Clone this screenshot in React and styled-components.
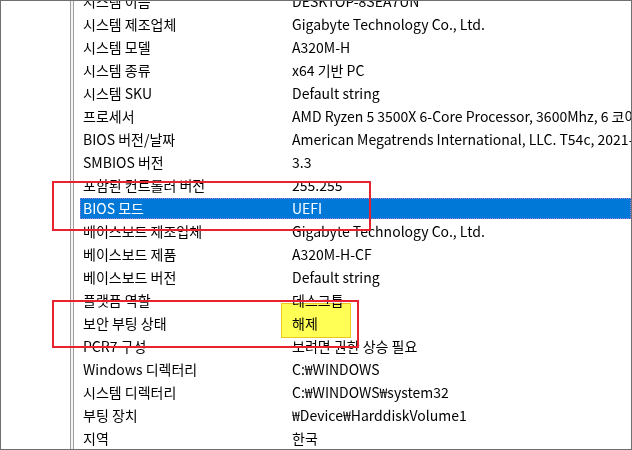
import React from "react";
import styled, { createGlobalStyle, css } from "styled-components";

const Global = createGlobalStyle`
  html, body { margin: 0; padding: 0; background: #ffffff; }
  body { font-family: "Noto Sans CJK KR", "Noto Sans", sans-serif; }
`;

const Frame = styled.div`
  position: relative;
  width: 632px;
  height: 450px;
  box-sizing: border-box;
  border: 1px solid #6f6f6f;
  display: flex;
  overflow: hidden;
  background: #fff;
`;

const TreePane = styled.div`
  width: 69px;
  flex: none;
  background: #fff;
`;

const Splitter = styled.div`
  width: 2px;
  flex: none;
  border-left: 1px solid #a0a0a0;
  border-right: 1px solid #a0a0a0;
  background: #f3f3f3;
`;

const ListPane = styled.div`
  flex: 1;
  min-width: 0;
  overflow: hidden;
`;

const Rows = styled.div`
  margin-top: -11px;
  padding-left: 6px;
  display: flex;
  flex-direction: column;
`;

const Row = styled.div`
  display: grid;
  grid-template-columns: 212px 1fr;
  height: 21px;
  margin: 1px 0;
  box-sizing: border-box;
  font-size: 14px;
  line-height: 21px;
  color: #000;
  white-space: nowrap;
  ${(p) =>
    p.$selected &&
    css`
      background: #0078d7;
      color: #fff;
      outline: 1px dotted #9a7ad0;
      outline-offset: -1px;
    `}
`;

const Name = styled.span`
  padding-left: 3px;
  overflow: hidden;
`;

const Value = styled.span`
  overflow: hidden;
`;

const RedBox = styled.div`
  position: absolute;
  box-sizing: border-box;
  border: 2px solid #e8232f;
  pointer-events: none;
`;

const Marker = styled.div`
  position: absolute;
  box-sizing: border-box;
  background: #ffff55;
  border: 1px solid #e6c81e;
  mix-blend-mode: multiply;
  pointer-events: none;
`;

const data = [
  ["시스템 이름", "DESKTOP-8SEA7UN"],
  ["시스템 제조업체", "Gigabyte Technology Co., Ltd."],
  ["시스템 모델", "A320M-H"],
  ["시스템 종류", "x64 기반 PC"],
  ["시스템 SKU", "Default string"],
  ["프로세서", "AMD Ryzen 5 3500X 6-Core Processor, 3600Mhz, 6 코어, 6 논리 프로세서"],
  ["BIOS 버전/날짜", "American Megatrends International, LLC. T54c, 2021-11-04"],
  ["SMBIOS 버전", "3.3"],
  ["포함된 컨트롤러 버전", "255.255"],
  ["BIOS 모드", "UEFI", true],
  ["베이스보드 제조업체", "Gigabyte Technology Co., Ltd."],
  ["베이스보드 제품", "A320M-H-CF"],
  ["베이스보드 버전", "Default string"],
  ["플랫폼 역할", "데스크톱"],
  ["보안 부팅 상태", "해제"],
  ["PCR7 구성", "보려면 권한 상승 필요"],
  ["Windows 디렉터리", "C:₩WINDOWS"],
  ["시스템 디렉터리", "C:₩WINDOWS₩system32"],
  ["부팅 장치", "₩Device₩HarddiskVolume1"],
  ["지역", "한국"],
];

export default function App() {
  return (
    <>
      <Global />
      <Frame>
        <TreePane />
        <Splitter />
        <ListPane>
          <Rows>
            {data.map(([n, v, sel]) => (
              <Row key={n} $selected={sel}>
                <Name>{n}</Name>
                <Value>{v}</Value>
              </Row>
            ))}
          </Rows>
        </ListPane>
        <RedBox style={{ left: 51, top: 180, width: 319, height: 50 }} />
        <RedBox style={{ left: 51, top: 299, width: 307, height: 48 }} />
        <Marker style={{ left: 280, top: 302, width: 70, height: 35 }} />
      </Frame>
    </>
  );
}
